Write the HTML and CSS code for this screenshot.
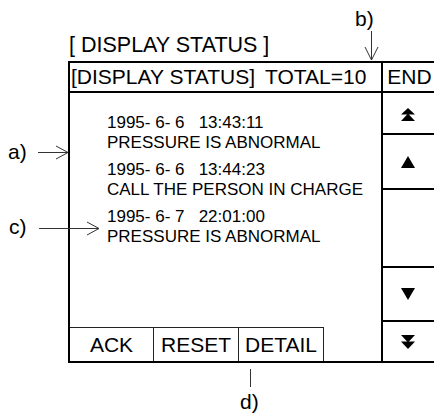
FILE: index.html
```html
<!DOCTYPE html>
<html lang="en">
<head>
  <meta charset="UTF-8">
  <title>Display Status</title>
  <link rel="stylesheet" href="styles.css">
</head>
<body>
  <div class="page">
    <h1 class="title">[ DISPLAY STATUS ]</h1>

    <div class="panel">
      <div class="main">
        <div class="head">[DISPLAY STATUS]<span class="total">TOTAL=10</span></div>
        <div class="list">
          <div class="msg">
            <div class="stamp">1995- 6- 6   13:43:11</div>
            <div>PRESSURE IS ABNORMAL</div>
          </div>
          <div class="msg">
            <div class="stamp">1995- 6- 6   13:44:23</div>
            <div>CALL THE PERSON IN CHARGE</div>
          </div>
          <div class="msg">
            <div class="stamp">1995- 6- 7   22:01:00</div>
            <div>PRESSURE IS ABNORMAL</div>
          </div>
        </div>
        <div class="btns">
          <button class="btn">ACK</button>
          <button class="btn">RESET</button>
          <button class="btn">DETAIL</button>
        </div>
      </div>

      <div class="side">
        <div class="end">END</div>
        <button class="key k-top">
          <svg width="16" height="14" viewBox="0 0 16 14"><polygon points="8,0 15,6.5 1,6.5"/><polygon points="8,5.5 15,13 1,13"/></svg>
        </button>
        <button class="key k-up">
          <svg width="16" height="12" viewBox="0 0 16 12"><polygon points="8,0 15,12 1,12"/></svg>
        </button>
        <div class="gap"></div>
        <button class="key k-down">
          <svg width="16" height="12" viewBox="0 0 16 12"><polygon points="1,0 15,0 8,12"/></svg>
        </button>
        <button class="key k-bottom">
          <svg width="16" height="14" viewBox="0 0 16 14"><polygon points="1,0 15,0 8,7.5"/><polygon points="1,6.5 15,6.5 8,14"/></svg>
        </button>
      </div>
    </div>

    <svg class="callouts" width="434" height="414" viewBox="0 0 434 414">
      <path d="M38 152.5 H68 M56 146 L68 152.5 L56 159"/>
      <path d="M39 228.5 H99 M87 222 L99 228.5 L87 235"/>
      <path d="M371.5 31 V60 M365 47 L371.5 60 L378 47"/>
      <path d="M250.5 369 V387"/>
    </svg>
    <span class="label la">a)</span>
    <span class="label lb">b)</span>
    <span class="label lc">c)</span>
    <span class="label ld">d)</span>
  </div>
</body>
</html>
```

FILE: styles.css
```css
body {
  margin: 0;
  background: #fff;
  color: #000;
  font-family: "Liberation Sans", Arial, sans-serif;
  overflow: hidden;
}
.page {
  position: relative;
  width: 434px;
  height: 414px;
  padding: 32px 0 0 68px;
  box-sizing: border-box;
  overflow: hidden;
}
.title {
  margin: 0 0 3px 1px;
  font-size: 21.5px;
  font-weight: normal;
  line-height: 26px;
}
.panel {
  display: flex;
  width: 366px;
  height: 302px;
  box-sizing: border-box;
  border: 2px solid #000;
  border-right: none;
}
.main {
  display: flex;
  flex-direction: column;
  width: 313px;
}
.head, .end {
  height: 30px;
  box-sizing: border-box;
  border-bottom: 2px solid #000;
  font-size: 21px;
  line-height: 28px;
  white-space: nowrap;
}
.head {
  padding-left: 1px;
}
.total {
  margin-left: 10px;
}
.list {
  flex: 1;
  padding: 20px 0 0 37px;
  font-size: 17px;
  line-height: 20px;
}
.msg + .msg {
  margin-top: 7px;
}
.stamp {
  white-space: pre;
}
.btns {
  display: grid;
  grid-template-columns: 84px 85px 85px;
  width: 254px;
}
.btn {
  height: 34px;
  padding: 0;
  border: none;
  border-top: 1px solid #222;
  border-right: 1px solid #222;
  background: #fff;
  font-family: inherit;
  font-size: 21px;
  color: #000;
}
.side {
  display: flex;
  flex-direction: column;
  width: 51px;
  border-left: 2px solid #000;
}
.end {
  padding-left: 4px;
}
.key {
  display: flex;
  flex: none;
  align-items: center;
  justify-content: center;
  padding: 0 2px 0 0;
  border: none;
  background: #fff;
  box-sizing: border-box;
}
.key svg {
  fill: #000;
}
.k-top {
  height: 42px;
  padding-top: 3px;
  border-bottom: 2px solid #000;
}
.k-up {
  height: 55px;
  border-bottom: 2px solid #000;
}
.gap {
  flex: 1;
}
.k-down {
  height: 56px;
  border-top: 2px solid #000;
  border-bottom: 2px solid #000;
}
.k-bottom {
  height: 39px;
}
.callouts {
  position: absolute;
  left: 0;
  top: 0;
  pointer-events: none;
}
.callouts path {
  fill: none;
  stroke: #333;
  stroke-width: 1;
}
.label {
  position: absolute;
  font-size: 21px;
  line-height: 22px;
}
.la { left: 8px; top: 141px; }
.lb { left: 355px; top: 8px; }
.lc { left: 9px; top: 216px; }
.ld { left: 240px; top: 391px; }
```
